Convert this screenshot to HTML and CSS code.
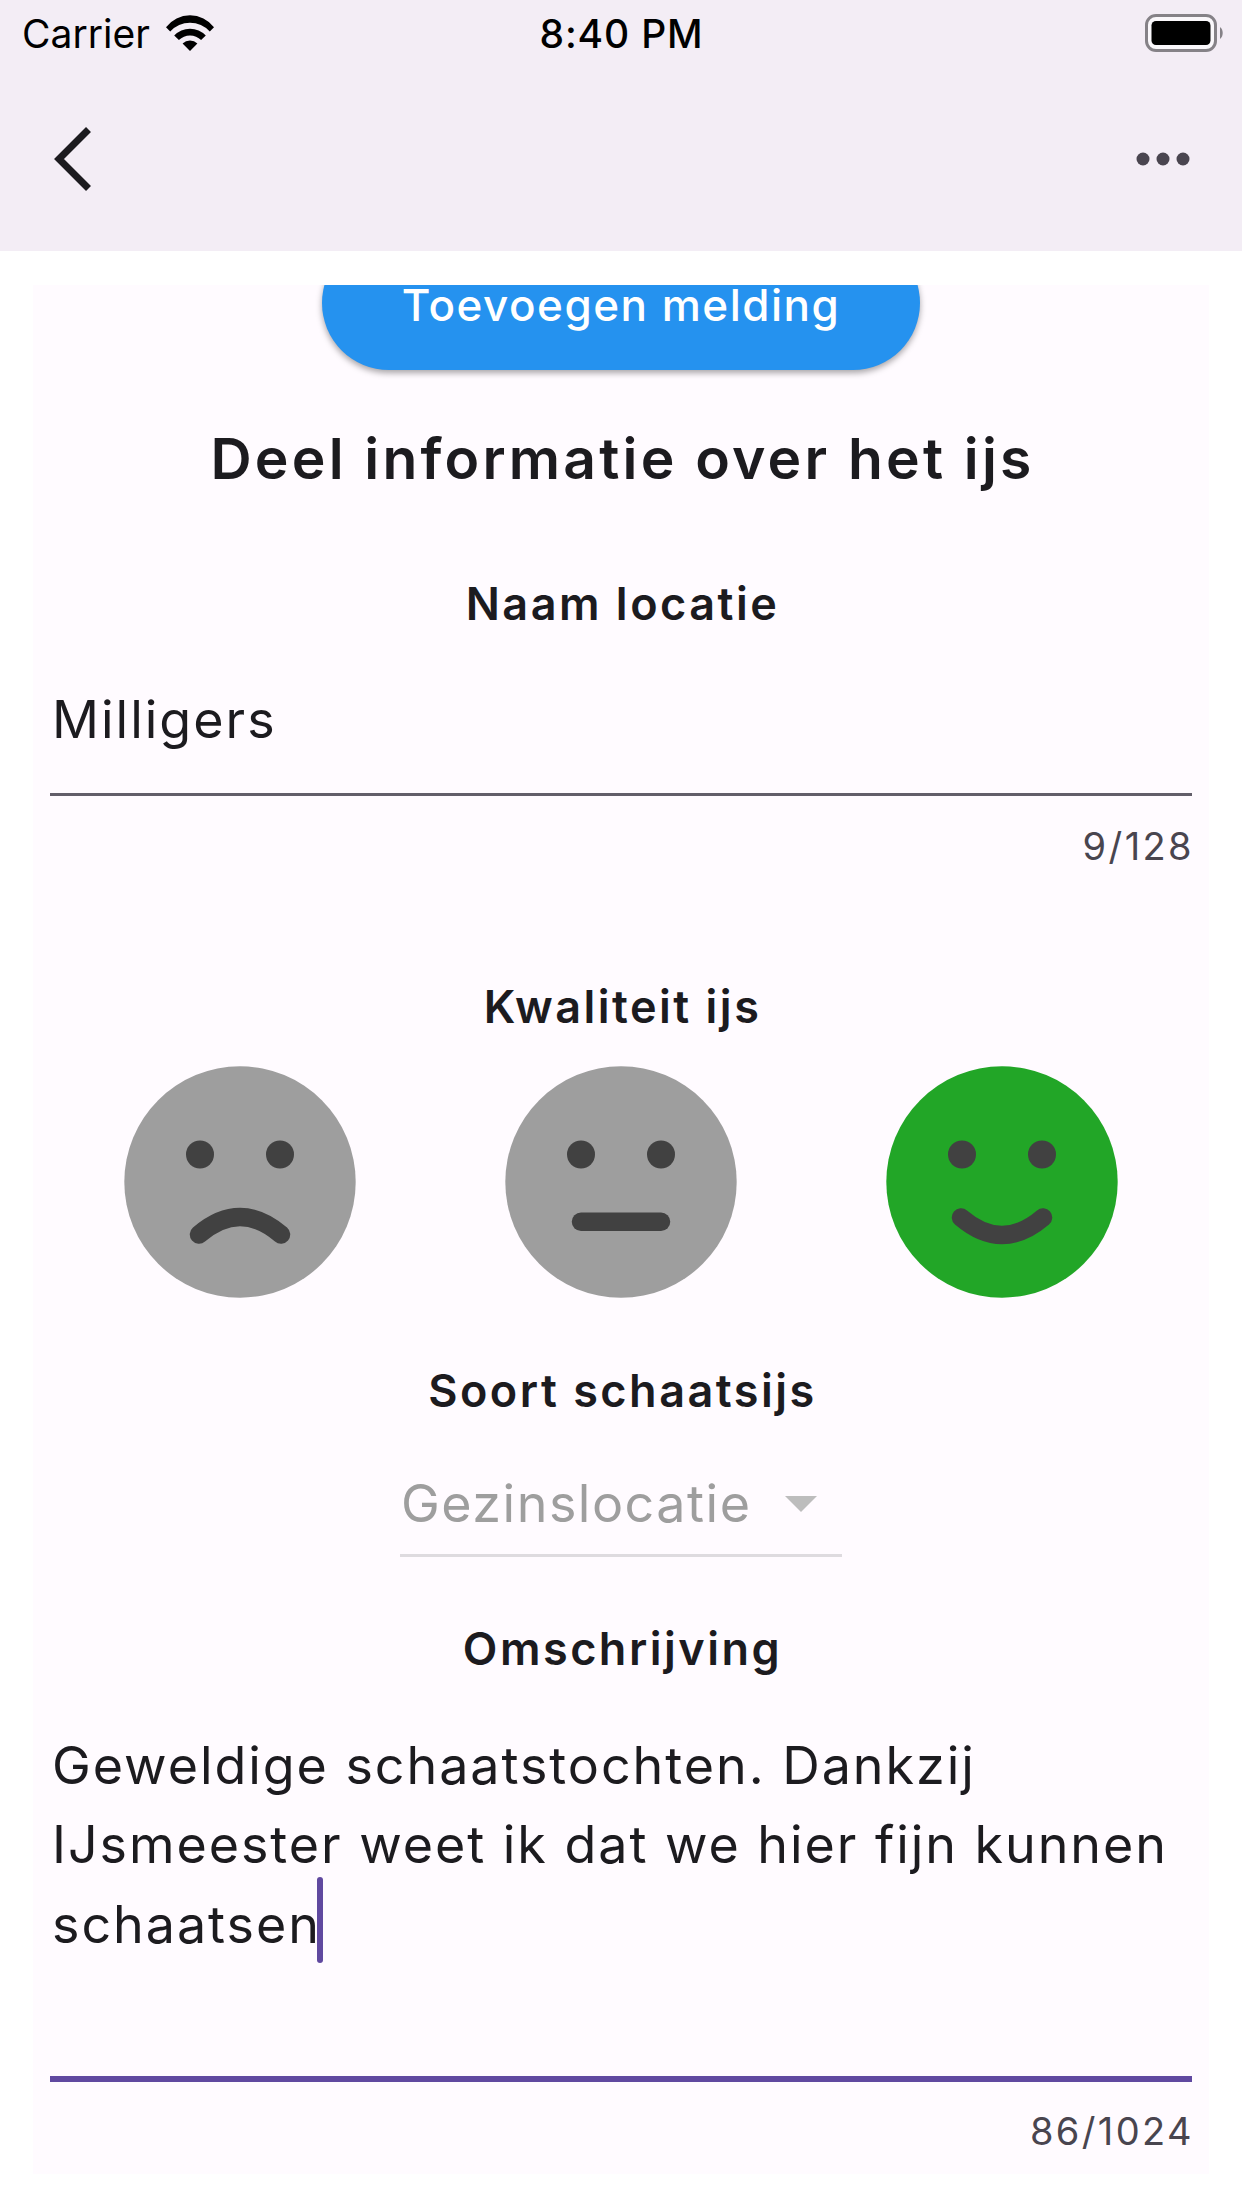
FILE: index.html
```html
<!DOCTYPE html>
<html lang="nl">
<head>
    <meta charset="UTF-8">
    <meta name="viewport" content="width=device-width, initial-scale=1.0">
    <title>Deel informatie over het ijs</title>
    <link rel="stylesheet" href="styles.css">
</head>
<body>
    <header class="top">
        <div class="status-bar">
            <div class="status-left">
                <span class="carrier">Carrier</span>
                <svg class="wifi" width="48" height="36" viewBox="0 0 48 36">
                    <path d="M0 12.200a30.200 30.200 0 0 1 48 0l-4.200 4.300a26.700 26.700 0 0 0-39.600 0z"/>
                    <path d="M8.200 20.600a21.500 21.500 0 0 1 31.600 0l-4.700 4.500a15.500 15.500 0 0 0-22.200 0z"/>
                    <path d="M16.600 28.600a10.600 10.600 0 0 1 14.800 0L24 36z"/>
                </svg>
            </div>
            <span class="time">8:40 PM</span>
            <svg class="battery" width="78" height="38" viewBox="0 0 78 38">
                <rect x="1.5" y="1.5" width="69" height="35" rx="9.5" fill="#fff" fill-opacity="0.6" stroke="#858287" stroke-width="3"/>
                <rect x="6.5" y="7" width="59" height="24" rx="4.5"/>
                <path d="M75 13c3.600 2.500 3.600 9.500 0 12z" fill="#858287"/>
            </svg>
        </div>
        <nav class="nav-bar">
            <svg class="back" width="40" height="66" viewBox="0 0 40 66">
                <path d="M35.500 3.500L6 33L35.500 62.500" fill="none" stroke="#1c1b1f" stroke-width="7"/>
            </svg>
            <svg class="more" width="54" height="14" viewBox="0 0 54 14">
                <circle cx="7" cy="7" r="6.500"/>
                <circle cx="27" cy="7" r="6.500"/>
                <circle cx="47" cy="7" r="6.500"/>
            </svg>
        </nav>
    </header>

    <main class="page">
        <button class="add-button" type="button">Toevoegen melding</button>

        <h1>Deel informatie over het ijs</h1>

        <h2 class="name-title">Naam locatie</h2>
        <div class="text-field">Milligers</div>
        <div class="counter">9/128</div>

        <h2 class="quality-title">Kwaliteit ijs</h2>
        <div class="faces">
            <svg class="face" viewBox="0 0 232 232">
                <circle class="head" cx="116" cy="116" r="115.700"/>
                <circle cx="76" cy="88.500" r="14"/>
                <circle cx="156" cy="88.500" r="14"/>
                <path class="mouth" d="M75 168.500Q116 133.500 157 168.500"/>
            </svg>
            <svg class="face" viewBox="0 0 232 232">
                <circle class="head" cx="116" cy="116" r="115.700"/>
                <circle cx="76" cy="88.500" r="14"/>
                <circle cx="156" cy="88.500" r="14"/>
                <path class="mouth" d="M76 155.700H156"/>
            </svg>
            <svg class="face selected" viewBox="0 0 232 232">
                <circle class="head" cx="116" cy="116" r="115.700"/>
                <circle cx="76" cy="88.500" r="14"/>
                <circle cx="156" cy="88.500" r="14"/>
                <path class="mouth" d="M75 151.500Q116 186.500 157 151.500"/>
            </svg>
        </div>

        <h2 class="type-title">Soort schaatsijs</h2>
        <div class="dropdown">
            <span>Gezinslocatie</span>
            <svg width="32" height="16" viewBox="0 0 32 16">
                <path d="M0 0H32L16 16z"/>
            </svg>
        </div>

        <h2 class="desc-title">Omschrijving</h2>
        <div class="text-area">Geweldige schaatstochten. Dankzij<br>IJsmeester weet ik dat we hier fijn kunnen<br>schaatsen<span class="caret"></span></div>
        <div class="counter desc-counter">86/1024</div>
    </main>
</body>
</html>
```

FILE: styles.css
```css
* {
    box-sizing: border-box;
}

body {
    margin: 0;
    height: 2208px;
    background-color: #fff;
    font-family: 'Inter', 'Liberation Sans', sans-serif;
    color: #1c1b1f;
    overflow: hidden;
}

/* Status bar and navigation */
.top {
    height: 251px;
    background-color: #f3edf5;
}

.status-bar {
    display: grid;
    grid-template-columns: 1fr auto 1fr;
    align-items: center;
    height: 66px;
    padding: 0 19px 0 22px;
    font-size: 39px;
    line-height: 64px;
    color: #000;
}

.status-left {
    display: flex;
    align-items: center;
    gap: 16px;
}

.carrier, .time {
    padding-top: 2px;
}

.time {
    padding-right: 2px;
    font-weight: 500;
    letter-spacing: 0.8px;
}

.battery {
    justify-self: end;
}

.nav-bar {
    display: flex;
    align-items: center;
    justify-content: space-between;
    height: 185px;
    padding: 0 52px 0 53px;
}

.more {
    fill: #49454f;
}

/* Scrolled form, the button is cut off at the top */
.page {
    display: flex;
    flex-direction: column;
    align-items: center;
    width: 1176px;
    height: 1889px;
    margin: 34px 0 0 33px;
    padding: 0 17px;
    background-color: #fffbff;
    overflow: hidden;
}

.add-button {
    flex-shrink: 0;
    width: 598px;
    height: 134px;
    margin-top: -49px;
    padding: 4px 0 0;
    border: none;
    border-radius: 67px;
    background-color: #2592ef;
    box-shadow: 0 3px 6px rgba(0, 0, 0, 0.35);
    color: #fff;
    font-family: inherit;
    font-size: 44px;
    font-weight: 500;
    letter-spacing: 1.5px;
}

h1 {
    margin: 54px 0 0;
    padding-left: 3px;
    font-size: 57px;
    font-weight: 600;
    line-height: 70px;
    letter-spacing: 3.2px;
}

h2 {
    margin: 0;
    padding: 1px 0 0 3px;
    font-size: 45px;
    font-weight: 600;
    line-height: 53px;
    letter-spacing: 2.5px;
}

.name-title {
    margin-top: 82px;
}

.text-field {
    width: 100%;
    margin-top: 50px;
    padding: 0 0 33px 2px;
    border-bottom: 3px solid #625e69;
    font-size: 52px;
    line-height: 80px;
    letter-spacing: 2px;
}

.counter {
    align-self: flex-end;
    margin: 26px -2px 0 0;
    font-size: 38px;
    line-height: 48px;
    letter-spacing: 2.4px;
    color: #49454f;
}

.quality-title {
    margin-top: 109px;
}

.faces {
    display: grid;
    grid-template-columns: repeat(3, 1fr);
    justify-items: center;
    width: 100%;
    margin-top: 33px;
}

.face {
    width: 232px;
    height: 232px;
    fill: #414141;
}

.head {
    fill: #9e9e9e;
}

.selected .head {
    fill: #22a627;
}

.mouth {
    fill: none;
    stroke: #414141;
    stroke-width: 18.5px;
    stroke-linecap: round;
}

.type-title {
    margin-top: 65px;
}

.dropdown {
    display: flex;
    align-items: center;
    justify-content: space-between;
    width: 442px;
    margin-top: 47px;
    padding: 0 25px 10px 1px;
    border-bottom: 3px solid #dedbdf;
    font-size: 52px;
    line-height: 80px;
    letter-spacing: 1.5px;
    color: #9e9e9e;
    fill: #bdbdbd;
}

.desc-title {
    margin-top: 64px;
}

.text-area {
    width: 100%;
    height: 356px;
    margin-top: 51px;
    padding-left: 2px;
    border-bottom: 6px solid #6049a0;
    font-size: 52px;
    line-height: 79.4px;
    letter-spacing: 1.95px;
    white-space: nowrap;
}

.caret {
    position: absolute;
    width: 6px;
    height: 86px;
    margin: -8px 0 0 -4px;
    border-radius: 3px;
    background-color: #6049a0;
}

.desc-counter {
    margin-top: 25px;
}
```
